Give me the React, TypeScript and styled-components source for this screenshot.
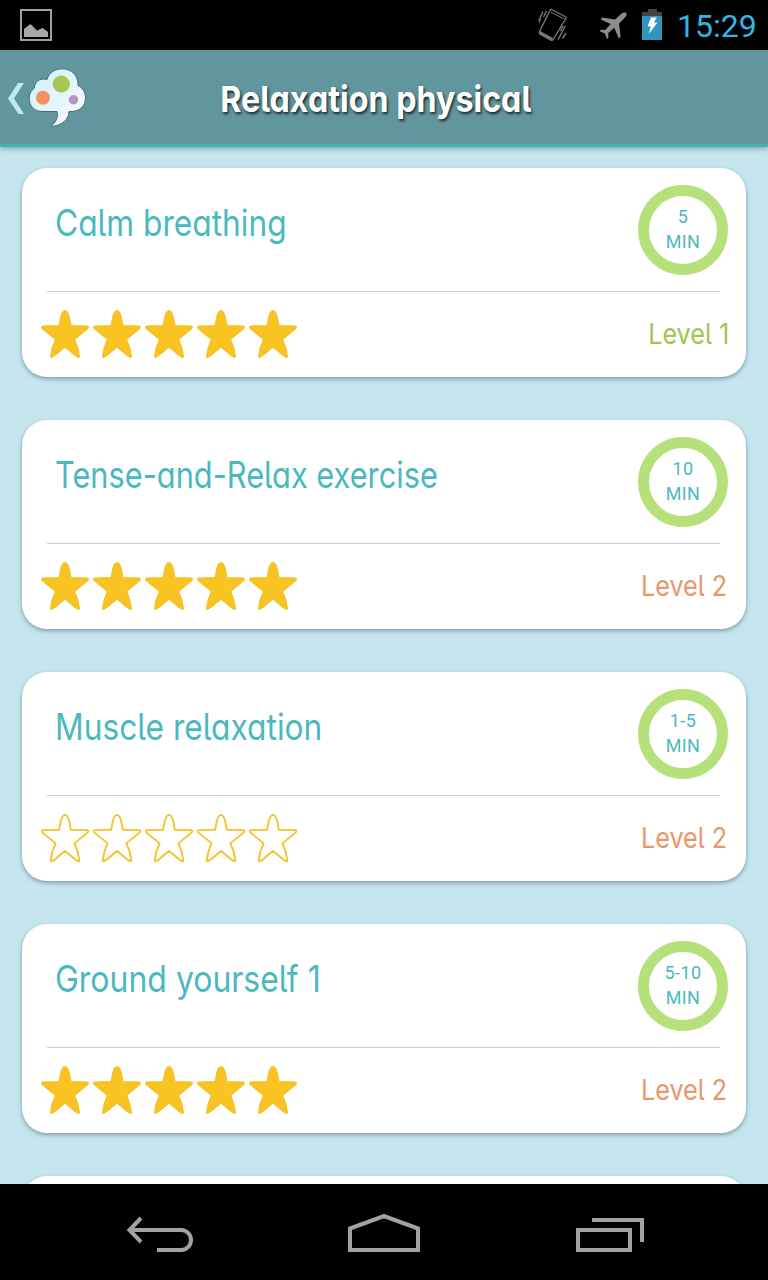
import React from "react";
import styled, { createGlobalStyle } from "styled-components";

const GlobalStyle = createGlobalStyle`
  * { box-sizing: border-box; }
  body { margin: 0; background: #000; }
`;

const Screen = styled.div`
  width: 768px;
  height: 1280px;
  display: flex;
  flex-direction: column;
  overflow: hidden;
  background: #c5e6ee;
  font-family: Inter, "Liberation Sans", sans-serif;
`;

const StatusBar = styled.div`
  height: 50px;
  flex: none;
  display: flex;
  align-items: center;
  justify-content: space-between;
  padding: 0 12px 0 20px;
  background: #000;
  svg { display: block; }
`;

const StatusIcons = styled.div`
  display: flex;
  align-items: center;
`;

const VibrateIcon = styled.svg`
  margin-right: 31px;
`;

const PlaneIcon = styled.svg`
  margin: 2px 14px 0 0;
`;

const Clock = styled.div`
  width: 79px;
  margin-left: 15px;
  padding-top: 2px;
  font: 400 32px/48px Roboto, sans-serif;
  color: #33b5e5;
  white-space: nowrap;
  text-align: right;
`;

const Header = styled.header`
  height: 97px;
  flex: none;
  display: grid;
  grid-template-columns: 96px 1fr 112px;
  align-items: center;
  background: #62969e;
  border-bottom: 3px solid #45b2b3;
  box-shadow: 0 2px 5px rgba(40, 80, 90, 0.4);
  z-index: 1;
`;

const HomeLink = styled.div`
  height: 94px;
  svg { display: block; }
`;

const Squeezed = styled.span<{ $scale: number; $origin: string }>`
  display: inline-block;
  white-space: nowrap;
  transform: scaleX(${(p) => p.$scale});
  transform-origin: ${(p) => p.$origin} center;
  font-feature-settings: "cv11", "cv05";
`;

const Title = styled.h1`
  margin: 0;
  padding-top: 3px;
  display: flex;
  justify-content: center;
  font-size: 36px;
  line-height: 50px;
  font-weight: 700;
  color: #fff;
  text-shadow: 1.5px 2px 3px rgba(0, 0, 0, 0.75);
`;

const List = styled.main`
  flex: 1;
  min-height: 0;
  overflow: hidden;
  padding: 21px 22px 0;
  display: flex;
  flex-direction: column;
  gap: 43px;
`;

const Card = styled.article`
  height: 209px;
  flex: none;
  background: #fff;
  border-radius: 25px;
  box-shadow: 0 2px 4px rgba(60, 85, 95, 0.5);
`;

const CardTop = styled.div`
  height: 124px;
  margin: 0 26px 0 25px;
  padding-left: 8px;
  display: flex;
  justify-content: space-between;
  border-bottom: 1px solid #cbcdce;
`;

const CardName = styled.h2`
  flex: 1;
  min-width: 0;
  margin: 0;
  padding-top: 30px;
  font-size: 37px;
  line-height: 50px;
  font-weight: 400;
  color: #4bb8bf;
`;

const Duration = styled.div`
  width: 90px;
  height: 90px;
  flex: none;
  margin: 17px -8px 0 0;
  border: 11px solid #b5e07a;
  border-radius: 50%;
  display: flex;
  flex-direction: column;
  align-items: center;
  padding-top: 8px;
  font: 400 18px/25px Roboto, sans-serif;
  letter-spacing: 0.4px;
  color: #4bb8bf;
  white-space: nowrap;
`;

const CardBottom = styled.div`
  height: 85px;
  padding: 0 18px 2px 17px;
  display: flex;
  align-items: center;
  justify-content: space-between;
`;

const Stars = styled.div`
  display: flex;
  svg { display: block; }
`;

const Level = styled.div<{ $first: boolean }>`
  font-size: 29px;
  line-height: 40px;
  margin-right: ${(p) => (p.$first ? "-1px" : "0.5px")};
  color: ${(p) => (p.$first ? "#a2c552" : "#e9976a")};
`;

const NavBar = styled.nav`
  height: 96px;
  flex: none;
  display: flex;
  align-items: center;
  justify-content: space-between;
  padding: 4px 124px 0;
  background: #000;
  z-index: 1;
  svg { display: block; fill: none; stroke: #a2a2a2; stroke-width: 4; }
`;

const Star = ({ filled }: { filled: boolean }) => (
  <svg width="52" height="52" viewBox="0 0 52 52">
    <path
      d="M26 2.8C27.7 2.8 29 5 30 8.4L31.9 17.8C38 18 44 17.6 48 18.2Q50.3 18.7 48.5 20.6C44.5 24.4 39.5 27.6 35.4 31.3C38.2 37 39.8 43 40.3 48.6Q40.3 49.6 39.2 49.2C34.5 47 29.8 41.5 26 39C22.2 41.5 17.5 47 12.8 49.2Q11.7 49.6 11.7 48.6C12.2 43 13.8 37 16.6 31.3C12.5 27.6 7.5 24.4 3.5 20.6Q1.7 18.7 4 18.2C8 17.6 14 18 20.1 17.8L22 8.4C23 5 24.3 2.8 26 2.8Z"
      fill={filled ? "#f9c322" : "none"}
      stroke="#f4c126"
      strokeWidth={filled ? 1.4 : 1.8}
      strokeLinejoin="round"
    />
  </svg>
);

const items = [
  { name: "Calm breathing", scale: 0.857, time: "5", stars: true, level: 1 },
  { name: "Tense-and-Relax exercise", scale: 0.831, time: "10", stars: true, level: 2 },
  { name: "Muscle relaxation", scale: 0.857, time: "1-5", stars: false, level: 2 },
  { name: "Ground yourself 1", scale: 0.864, time: "5-10", stars: true, level: 2 },
];

export default function App() {
  return (
    <Screen>
      <GlobalStyle />
      <StatusBar>
        <svg width="32" height="32" viewBox="0 0 32 32">
          <rect x="1" y="1" width="30" height="30" fill="none" stroke="#a0a0a0" strokeWidth="2" />
          <path d="M4 28V20L10.5 15L17 21.5L22.5 19L28 23V28Z" fill="#a8a8a8" />
        </svg>
        <StatusIcons>
          <VibrateIcon width="30" height="34" viewBox="0 0 30 34" fill="none" stroke="#777" strokeWidth="1.4">
            <path d="M13.5 1.5L27 8.5Q28.5 9.5 27.5 11L15.5 31Q14.5 33 13 32L2 26Q.7 25 1.5 23.5L12 2.5Q12.5 1 13.5 1.5Z" />
            <path d="M13 4.2L26 10.8" strokeWidth="1" />
            <path d="M2 23L15 30L13 33L1.2 26Z" fill="#777" stroke="none" />
            <path d="M8.5 3L5.5 9M5 3.5L1 12M2.5 11L1 14.5M27.3 18L20 31.5M25 18L22.5 23M28 25L24.5 30.5" />
          </VibrateIcon>
          <PlaneIcon width="29" height="28" viewBox="0 0 29 28">
            <path
              fill="#8c8c8c"
              d="M27.2 .8Q28.4 2.4 26.6 4.8L20 11.7L21.6 24.4L19.8 26.4L15.2 15.8L9.2 20.9L9.5 25.3L8 27L5.8 21.5L.5 19.2L2 17.7L6.2 18L11.8 12.1L1.6 7.4L3.4 5.6L16 7.6L22.6 1.6Q25.6-.2 27.2 .8Z"
            />
          </PlaneIcon>
          <svg width="20" height="32" viewBox="0 0 20 32">
            <path d="M6 0H15V3H20V8H0V3H6Z" fill="#444" />
            <rect y="7" width="20" height="24" fill="#3195bf" />
            <path d="M9 8.5H14.8L11.8 13.5H15.5L6.8 25L8.8 17.5H5.5Z" fill="#fff" />
          </svg>
          <Clock>15:29</Clock>
        </StatusIcons>
      </StatusBar>
      <Header>
        <HomeLink>
          <svg width="96" height="94" viewBox="0 50 96 94">
            <defs>
              <linearGradient id="cloud" x1="0" y1="0" x2="1" y2="1">
                <stop offset="0" stopColor="#d2eff7" />
                <stop offset=".5" stopColor="#e2f4fa" />
                <stop offset="1" stopColor="#fff" />
              </linearGradient>
            </defs>
            <path d="M18 83H24L14 98.5L24 114H18.5L8 98.5Z" fill="#bce9f2" />
            <path
              d="M42 111.5C34 111.5 29 105.5 29.2 98C29.4 92.5 32 90 34.5 88C34 82 40 77.5 47 79.5C49 72.5 55 68.8 62.5 68.8C72 68.8 78.5 76 78 85.5C82.5 88 85.5 92 85.5 98C85.5 106 80 111 72 111.5H69C69 119 62 126 50.5 126.5C56 122.5 58.3 118 57 111.5Z"
              fill="url(#cloud)"
              stroke="#426e78"
              strokeWidth="1"
            />
            <circle cx="61.3" cy="84" r="8.6" fill="#a3c954" />
            <circle cx="43" cy="97.7" r="7" fill="#f4915f" />
            <circle cx="73.5" cy="99.7" r="4.7" fill="#b596c2" />
          </svg>
        </HomeLink>
        <Title>
          <Squeezed $scale={0.895} $origin="center">Relaxation physical</Squeezed>
        </Title>
      </Header>
      <List>
        {items.map((item) => (
          <Card key={item.name}>
            <CardTop>
              <CardName>
                <Squeezed $scale={item.scale} $origin="left">{item.name}</Squeezed>
              </CardName>
              <Duration>
                <span>{item.time}</span>
                <span>MIN</span>
              </Duration>
            </CardTop>
            <CardBottom>
              <Stars>
                {[0, 1, 2, 3, 4].map((n) => (
                  <Star key={n} filled={item.stars} />
                ))}
              </Stars>
              <Level $first={item.level === 1}>
                <Squeezed $scale={0.87} $origin="right">Level {item.level}</Squeezed>
              </Level>
            </CardBottom>
          </Card>
        ))}
        <Card />
      </List>
      <NavBar>
        <svg width="69" height="40" viewBox="124 1214 69 40">
          <path d="M130 1230H181A10 10 0 0 1 181 1250H157" />
          <path d="M141 1218L129.5 1230L141 1242" />
        </svg>
        <svg width="72" height="40" viewBox="348 1214 72 40">
          <path d="M350 1250V1228.5L384 1216L418 1228.5V1250Z" />
        </svg>
        <svg width="69" height="40" viewBox="575 1214 69 40">
          <path d="M578 1230H630V1250H578ZM592 1220H642V1242" />
        </svg>
      </NavBar>
    </Screen>
  );
}
